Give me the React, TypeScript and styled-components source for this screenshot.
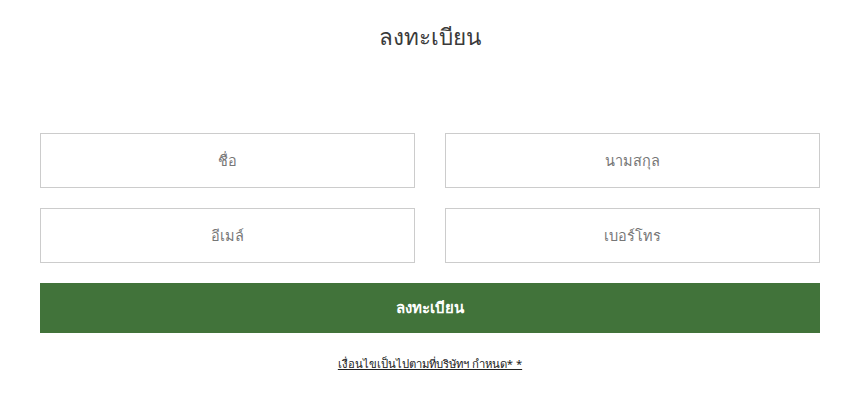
import styled, { createGlobalStyle } from "styled-components";

const GlobalStyle = createGlobalStyle`
  html, body {
    margin: 0;
    padding: 0;
    background: #ffffff;
    font-family: "Noto Sans", "DejaVu Sans", sans-serif;
  }
  * {
    box-sizing: border-box;
  }
`;

const fields = [
  [
    { name: "firstname", label: "ชื่อ" },
    { name: "lastname", label: "นามสกุล" },
  ],
  [
    { name: "email", label: "อีเมล์" },
    { name: "phone", label: "เบอร์โทร" },
  ],
];

export default function App() {
  return (
    <>
      <GlobalStyle />
      <Page>
        <Title>ลงทะเบียน</Title>
        <Form onSubmit={(e) => e.preventDefault()}>
          {fields.map((row, i) => (
            <Row key={i}>
              {row.map((f) => (
                <Input key={f.name} name={f.name} placeholder={f.label} />
              ))}
            </Row>
          ))}
          <Submit type="submit">ลงทะเบียน</Submit>
          <Terms href="#">เงื่อนไขเป็นไปตามที่บริษัทฯ กำหนด* *</Terms>
        </Form>
      </Page>
    </>
  );
}

const Page = styled.div`
  padding: 19px 40px 0;
  display: flex;
  flex-direction: column;
  align-items: center;
`;

const Title = styled.h1`
  margin: 0;
  height: 36px;
  line-height: 36px;
  font-size: 22.5px;
  font-weight: 400;
  color: #3a3a3a;
`;

const Form = styled.form`
  width: 100%;
  margin-top: 78px;
  display: flex;
  flex-direction: column;
  gap: 20px;
`;

const Row = styled.div`
  display: grid;
  grid-template-columns: 1fr 1fr;
  gap: 30px;
`;

const Input = styled.input`
  height: 55px;
  padding: 0 0 2px;
  border: 1px solid #cccccc;
  background: #ffffff;
  text-align: center;
  font-family: inherit;
  font-size: 14.5px;
  color: #333333;
  outline: none;

  &::placeholder {
    color: #777777;
  }
`;

const Submit = styled.button`
  height: 50px;
  border: none;
  background: #41733a;
  color: #ffffff;
  font-family: inherit;
  font-size: 15px;
  font-weight: bold;
  cursor: pointer;
`;

const Terms = styled.a`
  align-self: center;
  margin-top: 2px;
  font-size: 11.3px;
  color: #222222;
  text-decoration: underline;
`;
